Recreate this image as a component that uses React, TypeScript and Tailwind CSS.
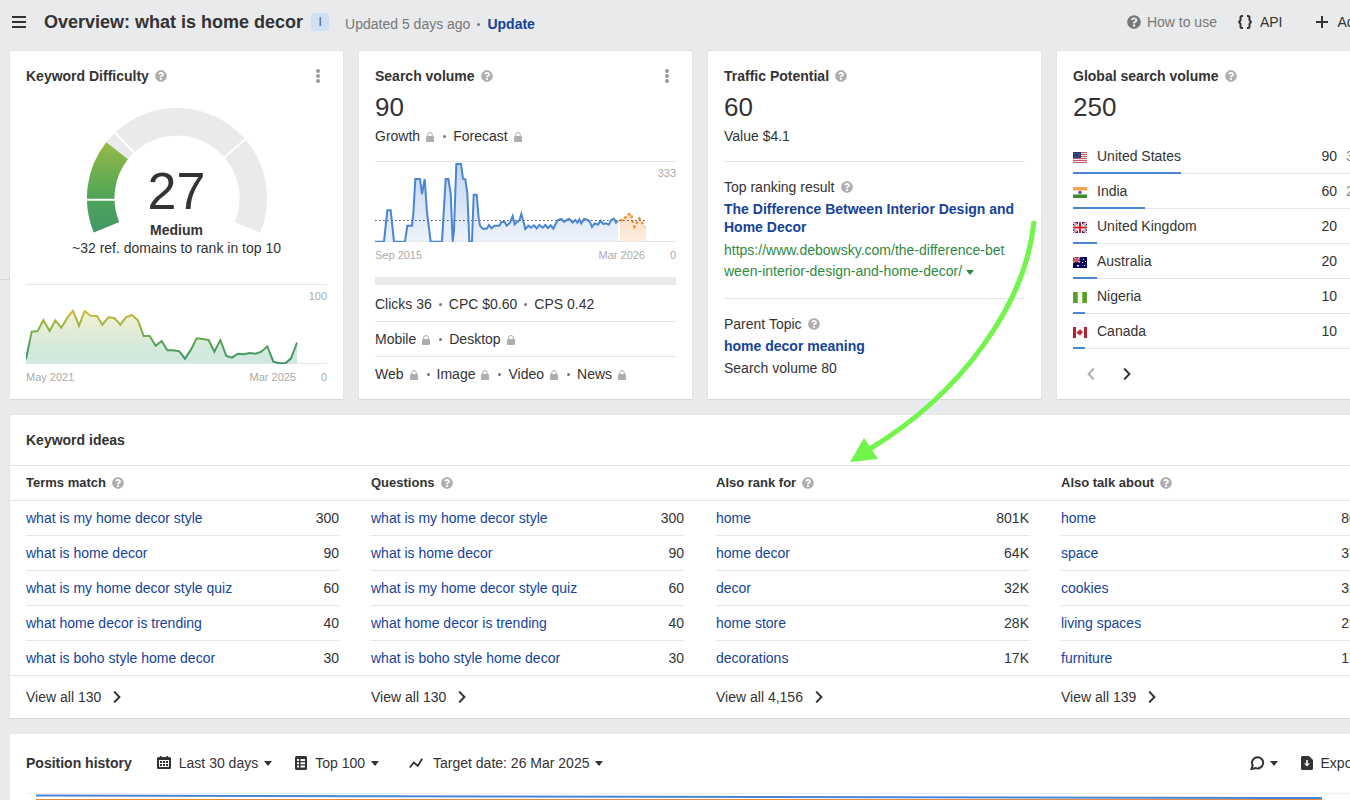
import type { ReactNode } from "react"
import { FaQuestionCircle } from "react-icons/fa"

type IdeaColumn = {
  title: string,
  viewAll: string,
  rows: [string, string][],
}

const ideas: IdeaColumn[] = [
  {
    title: "Terms match",
    viewAll: "130",
    rows: [
      ["what is my home decor style", "300"],
      ["what is home decor", "90"],
      ["what is my home decor style quiz", "60"],
      ["what home decor is trending", "40"],
      ["what is boho style home decor", "30"],
    ],
  },
  {
    title: "Questions",
    viewAll: "130",
    rows: [
      ["what is my home decor style", "300"],
      ["what is home decor", "90"],
      ["what is my home decor style quiz", "60"],
      ["what home decor is trending", "40"],
      ["what is boho style home decor", "30"],
    ],
  },
  {
    title: "Also rank for",
    viewAll: "4,156",
    rows: [
      ["home", "801K"],
      ["home decor", "64K"],
      ["decor", "32K"],
      ["home store", "28K"],
      ["decorations", "17K"],
    ],
  },
  {
    title: "Also talk about",
    viewAll: "139",
    rows: [
      ["home", "801K"],
      ["space", "370K"],
      ["cookies", "320K"],
      ["living spaces", "250K"],
      ["furniture", "170K"],
    ],
  },
]

const countries = [
  { code: "us", name: "United States", volume: 90, share: 36 },
  { code: "in", name: "India", volume: 60, share: 24 },
  { code: "gb", name: "United Kingdom", volume: 20, share: 8 },
  { code: "au", name: "Australia", volume: 20, share: 8 },
  { code: "ng", name: "Nigeria", volume: 10, share: 4 },
  { code: "ca", name: "Canada", volume: 10, share: 4 },
]

const difficultyLine =
  "78,478 95,395 113,393 130,360 149,393 166,361 184,383 202,353 219,332 237,377 254,333 272,347 291,348 307,374 325,352 343,354 361,374 378,352 396,345 414,361 431,408 449,408 467,437 485,423 502,451 520,451 538,454 555,476 573,449 590,415 608,417 626,420 643,455 661,420 679,468 696,473 713,461 731,463 749,459 767,461 784,455 802,439 820,485 838,490 856,490 873,475 891,428"

const volumeLine =
  "75,575 102,575 112,481 122,481 132,575 165,575 172,527 186,527 190,490 196,387 210,387 216,432 224,387 231,487 242,575 276,575 287,387 295,387 302,430 308,575 312,540 319,342 333,342 339,386 346,388 352,430 358,575 366,575 371,434 380,434 386,505 390,527 398,536 410,536 417,525 424,535 433,527 448,527 454,516 464,516 470,527 480,518 488,498 494,523 500,516 508,512 514,492 520,514 526,537 536,527 543,533 552,526 560,535 568,525 578,533 586,525 594,534 602,526 610,536 618,520 624,510 634,507 642,516 650,510 658,507 668,518 676,510 682,518 688,508 694,520 702,507 714,510 720,516 726,531 734,520 744,524 752,512 760,522 768,520 776,524 784,510 792,506 798,518 804,512"

const forecastLine =
  "810,512 820,508 828,500 834,494 844,492 848,515 853,530 862,515 868,506 876,518 884,530"

function Help() {
  return <FaQuestionCircle size={12} className="shrink-0 text-[#aeaeae]" />
}

function Lock() {
  return (
    <svg width="8" height="10" viewBox="0 0 8 10" className="mr-0.5 ml-1.5 inline-block align-[-1px]">
      <path d="M1.700 5V2.800a2.300 2.300 0 0 1 4.600 0V5" fill="none" stroke="#aeaeae" strokeWidth="1" />
      <rect x="0" y="4" width="8" height="6" rx="1" fill="#aeaeae" />
    </svg>
  )
}

function Dot() {
  return <span className="mx-[7px] inline-block size-[3px] rounded-full bg-[#777] align-[3px]" />
}

function Caret({ className = "" }: { className?: string }) {
  return (
    <svg width="8" height="5" viewBox="0 0 8 5" className={className}>
      <path d="M0 0h8L4 5z" fill="currentColor" />
    </svg>
  )
}

function Chevron({ flip = false }: { flip?: boolean }) {
  return (
    <svg width="8" height="12" viewBox="0 0 8 12" fill="none" stroke="currentColor" strokeWidth="2">
      <path d={flip ? "M6.800 .6 1.600 6l5.200 5.400" : "M1.200 .6 6.400 6l-5.200 5.400"} />
    </svg>
  )
}

function Flag({ code }: { code: string }) {
  return (
    <svg width="14" height="11" viewBox="0 0 14 11" className="mt-0.5 shrink-0">
      {code === "us" && (
        <>
          <path fill="#f3dfe1" d="M0 0h14v11H0z" />
          <path stroke="#c8606a" d="M0 .5h14M0 2.500h14M0 4.500h14M0 6.500h14M0 8.500h14M0 10.500h14" />
          <path fill="#2b3a6e" d="M0 0h8v6H0z" />
          <path fill="#6a78a8" d="M1 1h1v1H1zM4 1h1v1H4zM6 2h1v1H6zM2 4h1v1H2zM5 4h1v1H5z" />
        </>
      )}
      {code === "in" && (
        <>
          <path fill="#fff" d="M0 0h14v11H0z" />
          <path fill="#f8a352" d="M0 0h14v3.500H0z" />
          <path fill="#3d8b2f" d="M0 7.500h14V11H0z" />
          <circle cx="7" cy="5.500" r="1.800" fill="#5a5fb8" />
        </>
      )}
      {code === "gb" && (
        <>
          <path fill="#0b1a6b" d="M0 0h14v11H0z" />
          <path stroke="#fff" strokeWidth="2.200" d="M0 0l14 11M14 0L0 11" />
          <path stroke="#d0303a" strokeWidth=".8" d="M0 0l14 11M14 0L0 11" />
          <path stroke="#fff" strokeWidth="4" d="M7 0v11M0 5.500h14" />
          <path stroke="#c8202f" strokeWidth="2" d="M7 0v11M0 5.500h14" />
        </>
      )}
      {code === "au" && (
        <>
          <path fill="#06065e" d="M0 0h14v11H0z" />
          <path stroke="#d9a0b0" strokeWidth="1.600" d="M0 0l7 5.500M7 0L0 5.500" />
          <path stroke="#d0505a" strokeWidth="1.600" d="M3.500 0v5.500M0 2.700h7" />
          <path fill="#fff" d="M4 8h2v1.500H4zM10 2h1v1h-1zM12 4h1v1h-1zM9 5h1v1H9zM11 8h1v1h-1z" />
        </>
      )}
      {code === "ng" && (
        <>
          <path fill="#f4f8ef" d="M0 0h14v11H0z" />
          <path fill="#5aa02c" d="M0 0h4.700v11H0zM9.300 0H14v11H9.300z" />
        </>
      )}
      {code === "ca" && (
        <>
          <path fill="#fff" d="M0 0h14v11H0z" />
          <path fill="#b22334" d="M0 0h3v11H0zM11 0h3v11h-3z" />
          <path fill="#c22334" d="M7 2l.8 1.500 1-.3-.2 1.500 1.400-.2-.6 1.500-1.600 1.500H7.300V9h-.6V7.500H5.200L3.700 6 4 4.500l1.400.2-.2-1.500 1 .3z" />
        </>
      )}
    </svg>
  )
}

function Card({ children, className = "" }: { children: ReactNode, className?: string }) {
  return (
    <section className={`bg-white px-4 pt-[15px] pb-2 shadow-[0_0_1px_rgba(0,0,0,0.15),0_1px_0_rgba(0,0,0,0.06)] ${className}`}>
      {children}
    </section>
  )
}

function CardTitle({ children, menu = false }: { children: ReactNode, menu?: boolean }) {
  return (
    <div className="flex h-5 items-center gap-1.5">
      <h2 className="font-bold">{children}</h2>
      <Help />
      {menu && (
        <button aria-label="More" className="ml-auto flex w-[18px] justify-center">
          <svg width="4" height="14" viewBox="0 0 4 14" fill="#999">
            <circle cx="2" cy="2" r="2" />
            <circle cx="2" cy="7" r="2" />
            <circle cx="2" cy="12" r="2" />
          </svg>
        </button>
      )}
    </div>
  )
}

function AxisLabels({ from, to }: { from: string, to: string }) {
  return (
    <div className="mt-[5px] flex text-[11px] leading-4 text-[#aaa]">
      <span>{from}</span>
      <span className="ml-auto">{to}</span>
      <span className="w-[31px] text-right">0</span>
    </div>
  )
}

function Difficulty() {
  return (
    <Card>
      <CardTitle menu>Keyword Difficulty</CardTitle>
      <div className="relative mx-auto mt-[22px] h-[125px] w-[180px]">
        <svg width="180" height="125" viewBox="0 0 180 125" fill="none">
          <defs>
            <linearGradient id="gauge" gradientUnits="userSpaceOnUse" x1="0" y1="35" x2="0" y2="125">
              <stop offset="0" stopColor="#96b946" />
              <stop offset=".6" stopColor="#4fa557" />
              <stop offset="1" stopColor="#42966a" />
            </linearGradient>
          </defs>
          <path d="M19.500 119.200A76.300 76.300 0 1 1 160.500 119.200" stroke="#e9eaec" strokeWidth="27.500" />
          <path d="M19.500 119.200A76.300 76.300 0 0 1 30.100 42.800" stroke="url(#gauge)" strokeWidth="27.500" />
          <path d="M0 91.800h29M26 22.500l21 22.300M159 30.500l-23.500 20.500" stroke="#fff" strokeWidth="2" />
        </svg>
        <div className="absolute inset-x-0 bottom-[-6px] text-center">
          <div className="text-[52px] leading-[60px]">27</div>
          <div className="font-bold leading-[18px]">Medium</div>
        </div>
      </div>
      <p className="mt-1.5 text-center leading-[18px]">~32 ref. domains to rank in top 10</p>
      <div className="relative mt-[27px]">
        <svg viewBox="78 252 903 240" preserveAspectRatio="none" className="block h-20 w-full">
          <defs>
            <linearGradient id="kdLine" gradientUnits="userSpaceOnUse" x1="0" y1="330" x2="0" y2="490">
              <stop offset="0" stopColor="#d3bb35" />
              <stop offset=".3" stopColor="#93b545" />
              <stop offset=".65" stopColor="#52a15c" />
              <stop offset="1" stopColor="#3c9468" />
            </linearGradient>
            <linearGradient id="kdFill" gradientUnits="userSpaceOnUse" x1="0" y1="330" x2="0" y2="490">
              <stop offset="0" stopColor="#f6f1cf" />
              <stop offset=".65" stopColor="#d5eadb" />
              <stop offset="1" stopColor="#d0e8e0" />
            </linearGradient>
          </defs>
          <path d="M78 253.500h903M78 490.500h903" stroke="#e4e5e7" strokeWidth="3" />
          <polygon points={`78,490 ${difficultyLine} 891,490`} fill="url(#kdFill)" />
          <polyline points={difficultyLine} fill="none" stroke="url(#kdLine)" strokeWidth="6" />
        </svg>
        <span className="absolute top-1 right-0 text-[11px] leading-4 text-[#aaa]">100</span>
      </div>
      <AxisLabels from="May 2021" to="Mar 2025" />
    </Card>
  )
}

function SearchVolume() {
  return (
    <Card>
      <CardTitle menu>Search volume</CardTitle>
      <div className="mt-[5px] text-[26px] leading-8">90</div>
      <p className="mt-[3px] leading-5">
        Growth<Lock /><Dot />Forecast<Lock />
      </p>
      <div className="relative mt-[15px]">
        <svg viewBox="75 333 903 243" preserveAspectRatio="none" className="block h-[81px] w-full">
          <defs>
            <linearGradient id="svFill" x1="0" y1="0" x2="0" y2="1">
              <stop offset="0" stopColor="#c3d7f0" />
              <stop offset="1" stopColor="#edf2fa" />
            </linearGradient>
            <linearGradient id="fcFill" x1="0" y1="0" x2="0" y2="1">
              <stop offset="0" stopColor="#fbdcc2" />
              <stop offset="1" stopColor="#fdeee1" />
            </linearGradient>
          </defs>
          <path d="M75 334.500h903M75 574.500h903" stroke="#e4e5e7" strokeWidth="3" />
          <polygon points={`75,574 ${volumeLine} 804,574`} fill="url(#svFill)" />
          <polygon points={`810,574 ${forecastLine} 888,530 888,574`} fill="url(#fcFill)" />
          <path d="M75 511.500h813" stroke="#555" strokeWidth="3" strokeDasharray="5 7" />
          <polyline points={volumeLine} fill="none" stroke="#4a86d4" strokeWidth="6" />
          <polyline points={forecastLine} fill="none" stroke="#f08a2c" strokeWidth="7" strokeDasharray="8 7" />
        </svg>
        <span className="absolute top-1 right-0 text-[11px] leading-4 text-[#aaa]">333</span>
      </div>
      <AxisLabels from="Sep 2015" to="Mar 2026" />
      <div className="mt-3.5 h-2 bg-[#e9eaec]" />
      <p className="border-b border-[#e4e5e7] pt-[9px] pb-[7px] leading-5">
        Clicks 36<Dot />CPC $0.60<Dot />CPS 0.42
      </p>
      <p className="border-b border-[#e4e5e7] py-[7px] leading-5">
        Mobile<Lock /><Dot />Desktop<Lock />
      </p>
      <p className="py-[7px] leading-5">
        Web<Lock /><Dot />Image<Lock /><Dot />Video<Lock /><Dot />News<Lock />
      </p>
    </Card>
  )
}

function TrafficPotential() {
  return (
    <Card>
      <CardTitle>Traffic Potential</CardTitle>
      <div className="mt-[5px] text-[26px] leading-8">60</div>
      <p className="mt-[3px] leading-5">Value $4.1</p>
      <div className="mt-[15px] border-t border-[#e4e5e7] pt-[15px]">
        <div className="flex items-center gap-1.5 leading-5">Top ranking result <Help /></div>
        <a href="#" className="mt-[3px] block leading-[18px] font-bold text-[#15439a]">
          The Difference Between Interior Design and<br />Home Decor
        </a>
        <a href="#" className="mt-1 block leading-[21px] text-[#2f8a43]">
          https://www.debowsky.com/the-difference-bet<br />ween-interior-design-and-home-decor/
          <Caret className="ml-1 inline-block align-[1px]" />
        </a>
      </div>
      <div className="mt-4 border-t border-[#e4e5e7] pt-[15px]">
        <div className="flex items-center gap-1.5 leading-5">Parent Topic <Help /></div>
        <a href="#" className="mt-0.5 block leading-5 font-bold text-[#15439a]">home decor meaning</a>
        <p className="mt-0.5 leading-5">Search volume 80</p>
      </div>
    </Card>
  )
}

function GlobalVolume() {
  return (
    <Card>
      <CardTitle>Global search volume</CardTitle>
      <div className="mt-[5px] text-[26px] leading-8">250</div>
      <table className="mt-4 w-full border-separate border-spacing-0">
        <tbody>
          {countries.map((c) => (
            <tr key={c.code} className="relative">
              <td className="h-[35px] border-b border-[#e4e5e7]">
                <div className="flex items-center gap-2.5">
                  <Flag code={c.code} />
                  {c.name}
                </div>
                <div className="absolute bottom-0 left-0 h-0.5 bg-[#4a86d4]" style={{ width: `${c.share}%` }} />
              </td>
              <td className="border-b border-[#e4e5e7] text-right">{c.volume}</td>
              <td className="w-[37px] border-b border-[#e4e5e7] text-right text-[#888]">{c.share}%</td>
            </tr>
          ))}
        </tbody>
      </table>
      <div className="mt-2 flex">
        <button aria-label="Previous" className="flex h-[34px] w-9 items-center justify-center text-[#aeaeae]"><Chevron flip /></button>
        <button aria-label="Next" className="flex h-[34px] w-9 items-center justify-center"><Chevron /></button>
      </div>
    </Card>
  )
}

function KeywordIdeas() {
  return (
    <section className="mt-4 bg-white shadow-[0_0_1px_rgba(0,0,0,0.15),0_1px_0_rgba(0,0,0,0.06)]">
      <h2 className="px-4 py-[15px] leading-5 font-bold">Keyword ideas</h2>
      <div className="grid grid-cols-4">
        {ideas.map((col) => (
          <div key={col.title}>
            <div className="flex h-9 items-center gap-1.5 border-y border-[#e4e5e7] px-4">
              <h3 className="text-[13px] font-bold">{col.title}</h3>
              <Help />
            </div>
            <div className="px-4">
              <table className="w-full border-separate border-spacing-0">
                <tbody>
                  {col.rows.map(([term, volume], i) => {
                    const line = i < col.rows.length - 1 ? "h-[35px] border-b border-[#e4e5e7]" : "h-[34px]"
                    return (
                      <tr key={term}>
                        <td className={line}><a href="#" className="text-[#15439a]">{term}</a></td>
                        <td className={`text-right ${line}`}>{volume}</td>
                      </tr>
                    )
                  })}
                </tbody>
              </table>
            </div>
            <div className="border-t border-[#e4e5e7] px-4">
              <button className="flex h-[42px] items-center gap-3">View all {col.viewAll} <Chevron /></button>
            </div>
          </div>
        ))}
      </div>
    </section>
  )
}

function PositionHistory() {
  return (
    <section className="mt-4 bg-white px-4">
      <div className="flex h-[58px] items-center">
        <h2 className="mr-[25px] font-bold">Position history</h2>
        <button className="mr-[23px] flex items-center">
          <svg width="14" height="14" viewBox="0 0 14 14" className="mr-2">
            <path fill="#333" fillRule="evenodd" d="M1.500 1H3V0h1.500v1h5V0H11v1h1.500A1.500 1.500 0 0 1 14 2.500v9a1.500 1.500 0 0 1-1.500 1.500h-11A1.500 1.500 0 0 1 0 11.500v-9A1.500 1.500 0 0 1 1.500 1zM2 4v7h10V4z" />
            <path fill="#333" d="M3 5h2v2H3zM6 5h2v2H6zM9 5h2v2H9zM3 8h2v2H3zM6 8h2v2H6zM9 8h2v2H9z" />
          </svg>
          Last 30 days <Caret className="ml-1.5" />
        </button>
        <button className="mr-[30px] flex items-center">
          <svg width="12" height="14" viewBox="0 0 12 14" className="mr-2">
            <rect width="12" height="14" rx="1.500" fill="#333" />
            <path fill="#fff" d="M2 3h2v2H2zM5.500 3H10v2H5.500zM2 6.200h2v2H2zM5.500 6.200H10v2H5.500zM2 9.400h2v2H2zM5.500 9.400H10v2H5.500z" />
          </svg>
          Top 100 <Caret className="ml-1.5" />
        </button>
        <button className="flex items-center">
          <svg width="14" height="12" viewBox="0 0 14 12" fill="none" stroke="#333" strokeWidth="1.800" className="mr-2.5">
            <path d="M.8 10.500l4-5 4 3.300 4.400-7" />
          </svg>
          Target date: 26 Mar 2025 <Caret className="ml-1.5" />
        </button>
        <button aria-label="Notes" className="mr-[23px] ml-auto flex items-center">
          <svg width="15" height="14" viewBox="0 0 15 14" fill="none" stroke="#333" strokeWidth="2" className="mr-[5px]">
            <path d="M8 1.200a5.600 5.600 0 1 1-2.200 10.900L1.500 13l1.200-3.600A5.600 5.600 0 0 1 8 1.200z" />
          </svg>
          <Caret />
        </button>
        <button className="mr-[13px] flex items-center gap-2">
          <svg width="12" height="14" viewBox="0 0 12 14">
            <path fill="#333" d="M1.500 0H8l4 4v8.500a1.500 1.500 0 0 1-1.500 1.500h-9A1.500 1.500 0 0 1 0 12.500v-11A1.500 1.500 0 0 1 1.500 0z" />
            <path fill="#fff" d="M5.200 4h1.600v3.500H9l-3 3-3-3h2.200z" />
          </svg>
          Export
        </button>
      </div>
      <svg viewBox="0 0 1348 80" preserveAspectRatio="none" className="block h-20 w-full" fill="none">
        <path d="M0 1.500h1348" stroke="#ededee" />
        <path d="M10 3.500L1296 6" stroke="#4a86d4" strokeWidth="2" />
        <path d="M10 7.500h1286" stroke="#e98b3c" strokeWidth="1" />
      </svg>
    </section>
  )
}

export default function App() {
  return (
    <div className="relative h-screen overflow-hidden bg-[#e9eaec] font-['Liberation_Sans',Arial,sans-serif] text-sm text-[#333]">
      <div className="min-w-[1400px]">
        <header className="flex h-[51px] items-center pr-[22px] pb-[7px] pl-3">
          <button aria-label="Menu" className="mr-[18px]">
            <svg width="14" height="12" viewBox="0 0 14 12" fill="#333">
              <path d="M0 0h14v2H0zM0 5h14v2H0zM0 10h14v2H0z" />
            </svg>
          </button>
          <h1 className="text-lg font-bold">Overview: what is home decor</h1>
          <span className="ml-2 flex size-[18px] items-center justify-center rounded bg-[#cfe0f4] text-xs text-[#555]">I</span>
          <p className="ml-4 pt-1 text-[#777]">
            Updated 5 days ago<Dot />
            <a href="#" className="font-bold text-[#15439a]">Update</a>
          </p>
          <a href="#" className="ml-auto flex items-center gap-1.5 text-[#777]">
            <FaQuestionCircle size={14} />
            How to use
          </a>
          <a href="#" className="ml-[21px] flex items-center gap-2">
            <svg width="14" height="14" viewBox="0 0 14 14" fill="none" stroke="#333" strokeWidth="2">
              <path d="M5 1H4Q2.500 1 2.500 2.500V5.200L1 7l1.500 1.800v2.700Q2.500 13 4 13h1M9 1h1q1.500 0 1.500 1.500v2.700L13 7l-1.500 1.800v2.700Q11.500 13 10 13H9" />
            </svg>
            API
          </a>
          <button className="ml-[33px] flex items-center gap-2.5">
            <svg width="12" height="12" viewBox="0 0 12 12" fill="#333">
              <path d="M5 0h2v5h5v2H7v5H5V7H0V5h5z" />
            </svg>
            Add to
          </button>
        </header>
        <div className="flex">
          <aside className="w-2.5 shrink-0">
            <div className="mt-[228px] border-t border-[#d4d5d7]" />
          </aside>
          <main className="mr-2.5 flex-1">
            <div className="grid grid-cols-4 gap-4">
              <Difficulty />
              <SearchVolume />
              <TrafficPotential />
              <GlobalVolume />
            </div>
            <KeywordIdeas />
            <PositionHistory />
          </main>
        </div>
      </div>
      {/* annotation arrow drawn over the cards */}
      <svg width="200" height="250" viewBox="845 216 200 250" className="pointer-events-none absolute top-[216px] left-[845px]">
        <path d="M1034 221C1026 305 960 395 868 450" fill="none" stroke="#72f54a" strokeWidth="5" />
        <path d="M850 462l14-24 14 21z" fill="#72f54a" />
      </svg>
    </div>
  )
}
